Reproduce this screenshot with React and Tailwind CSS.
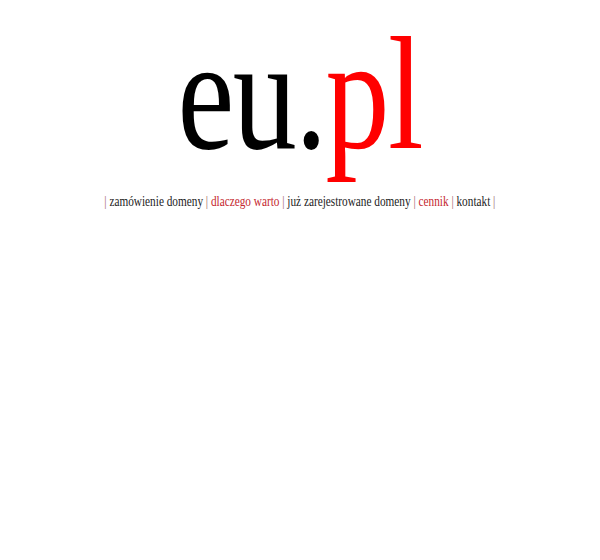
export default function App() {
  const links = [
    { label: "zamówienie domeny", red: false },
    { label: "dlaczego warto", red: true },
    { label: "już zarejestrowane domeny", red: false },
    { label: "cennik", red: true },
    { label: "kontakt", red: false },
  ];

  return (
    <div className="min-h-[560px] bg-white flex flex-col items-center font-['Liberation_Serif',serif]">
      {/* logo */}
      <div className="h-[189px] w-full flex justify-center">
        <div className="mt-[4px] text-[160px] leading-[180px] tracking-[-2px] scale-x-[0.8] whitespace-nowrap">
          <span className="text-black">eu.</span>
          <span className="text-[#ff0000]">pl</span>
        </div>
      </div>

      <nav className="text-[14px] leading-[26px] text-[#222] whitespace-nowrap scale-x-[0.805]">
        <span className="text-[#9a6464]">| </span>
        {links.map((l) => (
          <span key={l.label}>
            <a href="#" className={l.red ? "text-[#c4262e]" : "text-[#222]"}>
              {l.label}
            </a>
            <span className="text-[#9a6464]"> | </span>
          </span>
        ))}
      </nav>
    </div>
  );
}
